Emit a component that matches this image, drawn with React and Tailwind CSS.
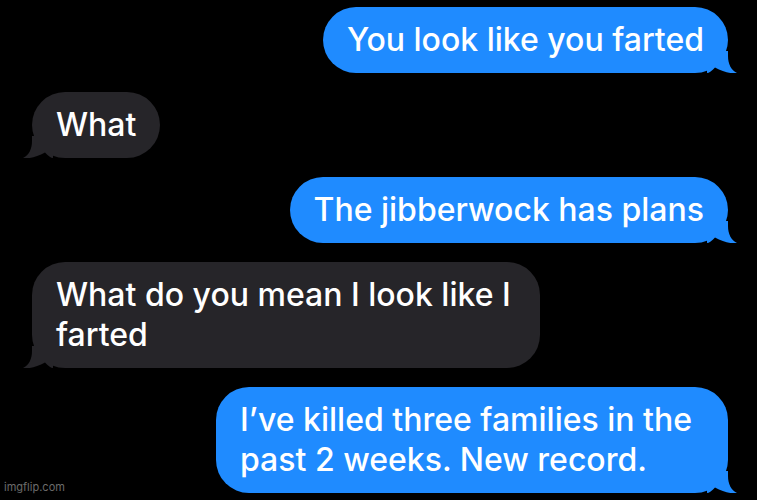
import React from "react";

const Tail = ({ side, color }) => (
  <svg
    width="30"
    height="22"
    viewBox="0 0 30 22"
    className={
      side === "right"
        ? "absolute bottom-0 right-[-9px]"
        : "absolute bottom-0 left-[-9px] -scale-x-100"
    }
  >
    <path
      d="M0 0 H21 V5 C21 13 24 19 30 22 C24 23 16 21 8 16.5 C5 20 2 22 0 22 Z"
      fill={color}
    />
  </svg>
);

const Bubble = ({ me, width, children }) => (
  <div className={me ? "flex justify-end pr-[29px]" : "flex justify-start pl-[32px]"}>
    <div
      className={`relative rounded-[33px] px-[24px] py-[13px] text-[32px] font-medium leading-[40px] text-white ${
        me ? "bg-[#1f8bff]" : "bg-[#262529]"
      } ${width}`}
    >
      {children}
      <Tail side={me ? "right" : "left"} color={me ? "#1f8bff" : "#262529"} />
    </div>
  </div>
);

const App = () => {
  return (
    <div
      className="relative h-[500px] w-[757px] overflow-hidden bg-black pt-[7px]"
      style={{ fontFamily: "Inter, 'Noto Sans', sans-serif" }}
    >
      <div className="flex flex-col gap-[19px]">
        <Bubble me>You look like you farted</Bubble>
        <Bubble>What</Bubble>
        <Bubble me>The jibberwock has plans</Bubble>
        <Bubble width="w-[508px]">
          What do you mean I look like I<br />
          farted
        </Bubble>
        <Bubble me width="w-[512px]">
          I’ve killed three families in the
          <br />
          past 2 weeks. New record.
        </Bubble>
      </div>

      {/* watermark */}
      <span className="absolute bottom-[5px] left-[4px] text-[11px] text-[#6b6b6b]">
        imgflip.com
      </span>
    </div>
  );
};

export default App;
